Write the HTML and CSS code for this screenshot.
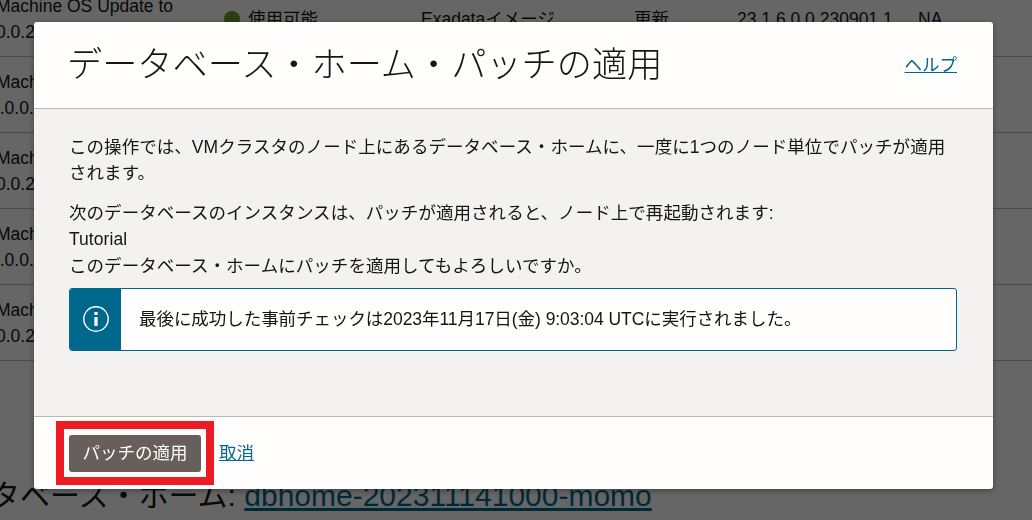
FILE: index.html
```html
<!DOCTYPE html>
<html lang="ja">
<head>
<meta charset="utf-8">
<title>データベース・ホーム・パッチの適用</title>
<link rel="stylesheet" href="styles.css">
</head>
<body>
<main class="page">
  <div class="rows">
    <div class="row">
      <div class="name">Machine OS Update to<br>0.0.2</div>
      <div class="status"><span class="dot"></span>使用可能</div>
      <div class="type">Exadataイメージ</div>
      <div class="kind">更新</div>
      <div class="version">23.1.6.0.0.230901.1</div>
      <div class="na">NA</div>
    </div>
    <div class="row"><div class="name">Machine<br><span class="pull">0.0.0.2</span></div></div>
    <div class="row"><div class="name">Machine<br>0.0.2</div></div>
    <div class="row"><div class="name">Machine<br><span class="pull">0.0.0.2</span></div></div>
    <div class="row"><div class="name">Machine<br>0.0.2</div></div>
  </div>
  <h2 class="home-title">データベース・ホーム: <a href="#" class="home-link">dbhome-202311141000-momo</a></h2>
</main>
<div class="scrim"></div>
<section class="dialog">
  <header class="dialog-head">
    <h1 class="dialog-title">データベース・ホーム・パッチの適用</h1>
    <a href="#" class="link">ヘルプ</a>
  </header>
  <div class="dialog-body">
    <p class="para">この操作では、VMクラスタのノード上にあるデータベース・ホームに、一度に1つのノード単位でパッチが適用されます。</p>
    <p class="para para-notice">次のデータベースのインスタンスは、パッチが適用されると、ノード上で再起動されます:<br>Tutorial<br>このデータベース・ホームにパッチを適用してもよろしいですか。</p>
    <div class="alert">
      <div class="alert-icon">
        <svg width="26" height="26" viewBox="0 0 26 26" fill="none">
          <circle cx="13" cy="13" r="12.2" stroke="#fff" stroke-width="1.4"/>
          <rect x="11.4" y="6" width="3.2" height="3" fill="#fff"/>
          <rect x="11.4" y="11" width="3.2" height="9" fill="#fff"/>
        </svg>
      </div>
      <div class="alert-text">最後に成功した事前チェックは2023年11月17日(金) 9:03:04 UTCに実行されました。</div>
    </div>
  </div>
  <footer class="dialog-foot">
    <button class="apply" type="button">パッチの適用</button>
    <a href="#" class="link">取消</a>
  </footer>
</section>
</body>
</html>
```
FILE: styles.css
```css
* { box-sizing: border-box; }
html, body {
  margin: 0;
  height: 520px;
  overflow: hidden;
  background: #fff;
}
body {
  font-family: "Liberation Sans", "Noto Sans CJK JP", sans-serif;
  font-size: 17.5px;
  line-height: 26px;
  color: #161513;
}
.page {
  width: 1032px;
  height: 520px;
  overflow: hidden;
}
.rows { margin-top: -19px; }
.row {
  height: 76px;
  padding-top: 1px;
  border-bottom: 1px solid #b8b8b8;
  display: grid;
  grid-template-columns: 224px 197px 213px 103px 181px 1fr;
  align-items: center;
}
.name { margin-left: -4px; white-space: nowrap; }
.pull { margin-left: -6px; }
.status { display: flex; align-items: center; gap: 8px; }
.dot {
  width: 16px;
  height: 16px;
  border-radius: 50%;
  background: #6c9b2a;
}
.home-title {
  margin: 117px 0 0 -70px;
  font-size: 30px;
  line-height: 36px;
  font-weight: 400;
  white-space: nowrap;
}
.home-link { color: #00688c; }
.scrim {
  position: fixed;
  inset: 0;
  background: rgba(0, 0, 0, 0.6);
}
.dialog {
  position: fixed;
  left: 34px;
  top: 22px;
  width: 959px;
  height: 467px;
  display: flex;
  flex-direction: column;
  background: #fffefd;
  border-radius: 3px;
  box-shadow: 0 2px 6px rgba(0, 0, 0, 0.35);
  overflow: hidden;
}
.dialog-head {
  height: 87px;
  flex: none;
  display: flex;
  align-items: center;
  justify-content: space-between;
  padding: 0 36px 0 33px;
  border-bottom: 1px solid #bcb8b2;
}
.dialog-title {
  margin: 0;
  font-size: 35.2px;
  line-height: 44px;
  font-weight: 300;
  color: #161513;
}
.link { color: #00688c; text-decoration: underline; }
.dialog-body {
  flex: 1;
  padding: 25px 36px 0 35px;
  background: #f3f2f1;
}
.para {
  margin: 0 0 14px;
  letter-spacing: 0.05px;
  line-height: 26px;
}
.para-notice {
  margin-bottom: 9px;
  line-height: 26.25px;
}
.alert {
  display: flex;
  align-items: center;
  height: 63px;
  background: #fffefd;
  border: 1px solid #00688c;
  border-radius: 3px;
  overflow: hidden;
  letter-spacing: -0.05px;
}
.alert-icon {
  width: 51px;
  height: 100%;
  flex: none;
  display: flex;
  align-items: center;
  justify-content: center;
  background: #00688c;
}
.alert-text { padding-left: 18px; }
.dialog-foot {
  height: 73px;
  flex: none;
  display: flex;
  align-items: center;
  gap: 18px;
  padding-left: 35px;
  border-top: 1px solid #bcb8b2;
}
.apply {
  position: relative;
  width: 132px;
  height: 37px;
  padding: 0;
  border: 0;
  border-radius: 3px;
  background: #665f5b;
  color: #fff;
  font: inherit;
}
.apply::after {
  content: "";
  position: absolute;
  inset: -14px -13px -13px;
  border: 8px solid #ed1c24;
}
```
